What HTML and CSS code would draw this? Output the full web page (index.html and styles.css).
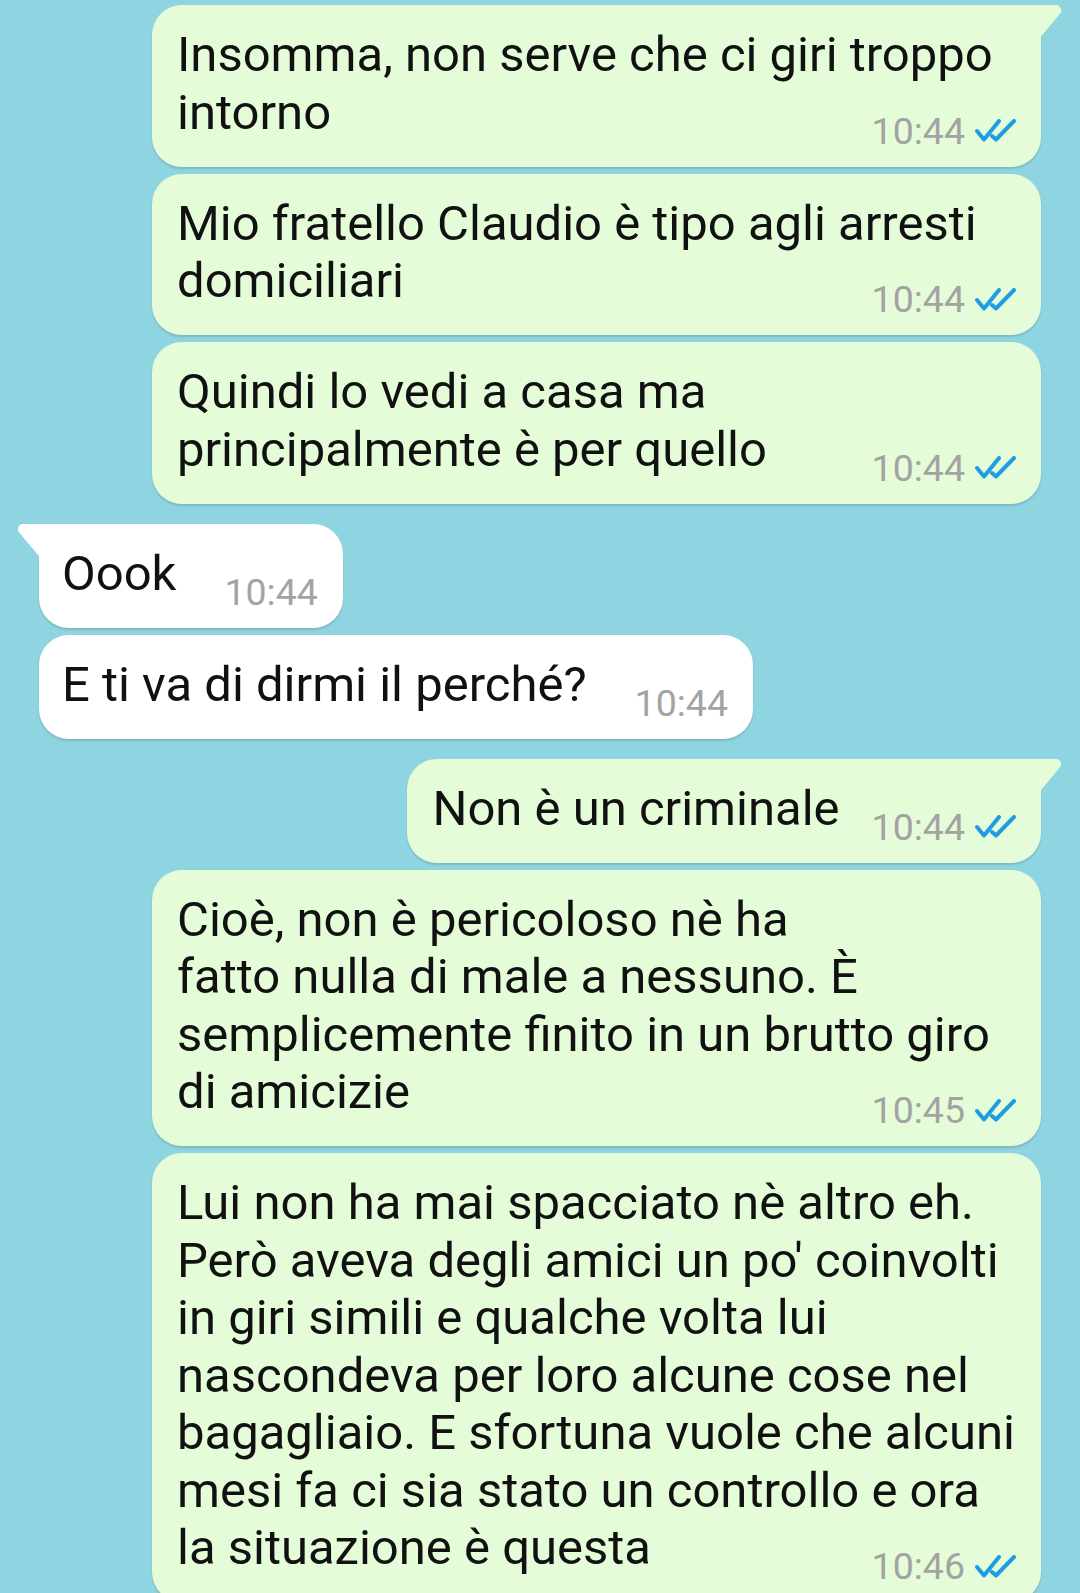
FILE: index.html
```html
<!DOCTYPE html>
<html lang="it">

<head>
    <meta charset="UTF-8">
    <title>Chat</title>
    <link rel="stylesheet" href="styles.css">
</head>

<body>
    <div class="chat">
        <!-- messaggi inviati -->
        <div class="bubble out wide tail">
            <p class="text">Insomma, non serve che ci giri troppo<br>intorno<span class="meta">10:44<svg class="ticks" viewBox="0 0 41 23"><path d="M2 12 L9 20.5 L24 2 M17 17 L21 20.5 L39 2"/></svg></span></p>
        </div>
        <div class="bubble out wide">
            <p class="text">Mio fratello Claudio è tipo agli arresti<br>domiciliari<span class="meta">10:44<svg class="ticks" viewBox="0 0 41 23"><path d="M2 12 L9 20.5 L24 2 M17 17 L21 20.5 L39 2"/></svg></span></p>
        </div>
        <div class="bubble out wide">
            <p class="text">Quindi lo vedi a casa ma<br>principalmente è per quello<span class="meta">10:44<svg class="ticks" viewBox="0 0 41 23"><path d="M2 12 L9 20.5 L24 2 M17 17 L21 20.5 L39 2"/></svg></span></p>
        </div>

        <!-- messaggi ricevuti -->
        <div class="bubble in tail new-group">
            <p class="text">Oook<span class="meta">10:44</span></p>
        </div>
        <div class="bubble in">
            <p class="text">E ti va di dirmi il perché?<span class="meta">10:44</span></p>
        </div>

        <div class="bubble out tail new-group">
            <p class="text">Non è un criminale<span class="meta">10:44<svg class="ticks" viewBox="0 0 41 23"><path d="M2 12 L9 20.5 L24 2 M17 17 L21 20.5 L39 2"/></svg></span></p>
        </div>
        <div class="bubble out wide">
            <p class="text">Cioè, non è pericoloso nè ha<br>fatto nulla di male a nessuno. È<br>semplicemente finito in un brutto giro<br>di amicizie<span class="meta">10:45<svg class="ticks" viewBox="0 0 41 23"><path d="M2 12 L9 20.5 L24 2 M17 17 L21 20.5 L39 2"/></svg></span></p>
        </div>
        <div class="bubble out wide">
            <p class="text">Lui non ha mai spacciato nè altro eh.<br>Però aveva degli amici un po' coinvolti<br>in giri simili e qualche volta lui<br>nascondeva per loro alcune cose nel<br>bagagliaio. E sfortuna vuole che alcuni<br>mesi fa ci sia stato un controllo e ora<br>la situazione è questa<span class="meta">10:46<svg class="ticks" viewBox="0 0 41 23"><path d="M2 12 L9 20.5 L24 2 M17 17 L21 20.5 L39 2"/></svg></span></p>
        </div>
    </div>
</body>

</html>
```

FILE: styles.css
```css
/* reset */
* {
    box-sizing: border-box;
    margin: 0;
    padding: 0;
}

body {
    font-family: Roboto, 'Noto Sans', sans-serif;
    background-color: #8fd4e1;
    color: #111;
}

.chat {
    display: flex;
    flex-direction: column;
    gap: 7px;
    padding: 5px 39px 40px 39px;
}

.bubble {
    position: relative;
    display: flow-root;
    max-width: 889px;
    padding: 21px 25px 16px 25px;
    border-radius: 30px;
    box-shadow: 0 2px 2px rgba(0, 0, 0, 0.13);
}

.bubble.out {
    align-self: flex-end;
    background-color: #e5fcd8;
}

.bubble.in {
    align-self: flex-start;
    background-color: #fff;
    padding-left: 23px;
}

.bubble.wide {
    width: 889px;
}

.new-group {
    margin-top: 13px;
}

.text {
    font-size: 49px;
    line-height: 57.5px;
    white-space: nowrap;
}

/* ora + spunte in basso a destra */
.meta {
    float: right;
    display: flex;
    align-items: center;
    gap: 10px;
    margin: 27px 0 0 32px;
    font-size: 37.5px;
    line-height: 40px;
    color: #a3a3a3;
}

.in .meta {
    margin-left: 48px;
}

.ticks {
    width: 41px;
    height: 23px;
    fill: none;
    stroke: #1f9de2;
    stroke-width: 4;
    stroke-linecap: round;
    stroke-linejoin: round;
}

/* codina della nuvoletta */
.bubble.tail.out {
    border-top-right-radius: 0;
}

.bubble.tail.in {
    border-top-left-radius: 0;
}

.bubble.tail::after {
    content: '';
    position: absolute;
    top: 0;
    width: 22px;
    height: 34px;
    background-color: inherit;
}

.bubble.tail.out::after {
    right: -20px;
    border-top-right-radius: 5px;
    clip-path: polygon(0 0, 100% 0, 100% 22%, 0 100%);
}

.bubble.tail.in::after {
    left: -21px;
    border-top-left-radius: 5px;
    clip-path: polygon(0 0, 100% 0, 100% 100%, 0 22%);
}
```
